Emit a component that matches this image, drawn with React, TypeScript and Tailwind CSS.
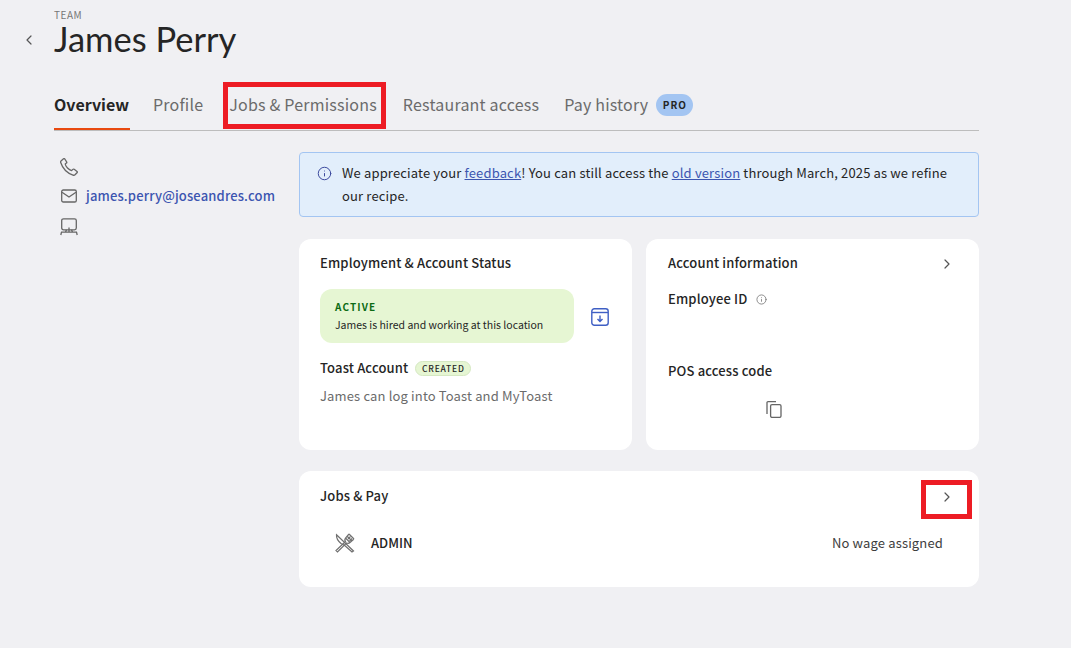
import { ChevronLeft, ChevronRight, Info } from 'lucide-react'

const body = "font-['Noto_Sans_CJK_SC','Noto_Sans',sans-serif]"

function UtensilsIcon() {
  return (
    <svg width="20" height="20" viewBox="0 0 20 20" fill="none" stroke="#707070" strokeWidth="1.2">
      {/* knife */}
      <path d="M1.5 1.8 L18.5 18 L17 19 L10 12.8 L6 10.5 C3 8 1.2 5 1.5 1.8 Z" />
      {/* fork */}
      <path d="M14 1 L19 6 M12 3 L17 8 M10.5 5 L15 9.5 M14 1 L10.5 5 C9.5 6.5 10 8 10.5 8.5 L1 17.5 L2.5 19 L11.5 10 C12.5 10.5 14 10.5 15 9.5 L19 6" />
      <path d="M15.5 3.5 L13 6 M17 5.5 L14.5 8" />
    </svg>
  )
}

function PhoneIcon() {
  return (
    <svg width="18" height="18" viewBox="0 0 18 18" fill="none" stroke="#666" strokeWidth="1.3" strokeLinejoin="round">
      <path d="M1 3 L3.5 0.8 C4 0.5 4.5 0.6 4.8 1 L6.6 3.8 C6.9 4.3 6.8 4.8 6.4 5.1 L5.2 6 C5.6 8.5 8.8 12 11.6 12.6 L12.8 11.4 C13.2 11 13.7 11 14.2 11.3 L17 13.4 C17.4 13.8 17.4 14.3 17 14.7 L15 16.8 C14.5 17.3 13.8 17.4 13 17.1 C7 15 2.5 10 0.7 4.5 C0.5 3.9 0.6 3.4 1 3 Z" />
    </svg>
  )
}

function MailIcon() {
  return (
    <svg width="16" height="14" viewBox="0 0 16 14" fill="none" stroke="#666" strokeWidth="1.3">
      <rect x="0.7" y="1" width="14.6" height="12" rx="1.6" />
      <path d="M1 3.2 L8 8 L15 3.2" />
    </svg>
  )
}

function DesktopIcon() {
  return (
    <svg width="18" height="18" viewBox="0 0 18 18" fill="none" stroke="#666" strokeWidth="1.3">
      <rect x="1.7" y="0.8" width="14.6" height="11" rx="1.8" />
      <path d="M9 9.5 V14 M6.5 11.8 L5.5 14 M11.5 11.8 L12.5 14 M1 14.2 H17 M1.5 14.2 L0.8 17 M16.5 14.2 L17.2 17" />
    </svg>
  )
}

function ArchiveIcon() {
  return (
    <svg width="18" height="18" viewBox="0 0 18 18" fill="none" stroke="#3f5fc4" strokeWidth="1.4">
      <rect x="0.8" y="0.8" width="16.4" height="16.4" rx="2.5" />
      <path d="M1 4.5 H17" />
      <path d="M9 7.5 V13.5 M6.5 11 L9 13.5 L11.5 11" />
    </svg>
  )
}

function CopyIcon() {
  return (
    <svg width="16" height="17" viewBox="0 0 16 17" fill="none" stroke="#666" strokeWidth="1.3">
      <path d="M1 13 V1.6 C1 1 1.4 0.7 2 0.7 H10" />
      <rect x="4.6" y="3.6" width="10.4" height="12.8" rx="1.4" />
    </svg>
  )
}

export default function App() {
  return (
    <div className={`${body} relative min-h-[648px] bg-[#f0f0f3] text-[#252525] overflow-hidden`}>
      {/* 页头 */}
      <div className="flex pl-[21px] pt-[9px]">
        <ChevronLeft className="w-[16px] h-[16px] mt-[23px] text-[#555]" strokeWidth={1.8} />
        <div className="ml-[17px]">
          <div className="text-[10px] leading-[12px] tracking-[0.5px] text-[#777]">TEAM</div>
          <h1 className="font-['Lato',sans-serif] text-[34.5px] leading-[38px] mt-[-1px] text-[#252525]">James Perry</h1>
        </div>
      </div>

      {/* tabs */}
      <div className="ml-[54px] mr-[92px] mt-[24px] h-[49px] border-b border-[#bdbdbd] flex items-start text-[16px] leading-[44px] tracking-[0.2px] text-[#6b6b6b]">
        <div className="w-[76px] h-[48px] border-b-2 border-[#e8490f] font-bold tracking-normal text-[#252525]">Overview</div>
        <div className="ml-[23px]">Profile</div>
        <div className="ml-[26px]">Jobs &amp; Permissions</div>
        <div className="ml-[26px]">Restaurant access</div>
        <div className="ml-[25px]">Pay history</div>
        <div className="ml-[8px] mt-[12px] h-[22px] w-[37px] rounded-full bg-[#a3c5f2] text-[10px] leading-[21px] font-bold tracking-[1px] text-center text-[#252525]">PRO</div>
      </div>

      <div className="ml-[54px] mr-[92px] mt-[21px] flex text-[13px] tracking-[0.15px]">
        {/* 联系方式 */}
        <div className="w-[245px] shrink-0 pl-[6px] pt-[6px]">
          <PhoneIcon />
          <div className="flex items-center mt-[10px] h-[20px]">
            <div className="w-[18px] flex justify-start pl-[1px]">
              <MailIcon />
            </div>
            <span className="ml-[8px] font-medium text-[#3c55b0] whitespace-nowrap">james.perry@joseandres.com</span>
          </div>
          <div className="mt-[12px]">
            <DesktopIcon />
          </div>
        </div>

        <div className="flex-1 min-w-0">
          {/* 提示 */}
          <div className="h-[65px] rounded border border-[#a3c5f2] bg-[#e2eefb] flex pl-[17px] pr-[20px] pt-[8px]">
            <Info className="w-[15px] h-[15px] mt-[5px] shrink-0 text-[#3c4a9e]" strokeWidth={1.6} />
            <p className="ml-[10px] leading-[23px] text-[#252525]">
              We appreciate your <span className="underline text-[#3c55b0]">feedback</span>! You can still access the{' '}
              <span className="underline text-[#3c55b0]">old version</span> through March, 2025 as we refine our recipe.
            </p>
          </div>

          <div className="grid grid-cols-2 gap-[14px] mt-[22px]">
            {/* 状态卡片 */}
            <div className="h-[211px] bg-white rounded-[12px] px-[21px] pt-[14px]">
              <div className="leading-[20px] font-medium">Employment &amp; Account Status</div>
              <div className="flex items-center mt-[16px]">
                <div className="w-[254px] h-[54px] rounded-[12px] bg-[#e6f6d3] pl-[15px] pt-[10px]">
                  <div className="text-[10px] leading-[16px] font-bold tracking-[1.1px] text-[#0c6b14]">ACTIVE</div>
                  <div className="text-[10.5px] leading-[19px] tracking-normal text-[#252525]">James is hired and working at this location</div>
                </div>
                <div className="ml-[17px] mt-[2px]">
                  <ArchiveIcon />
                </div>
              </div>
              <div className="flex items-center mt-[15px]">
                <span className="leading-[20px] font-medium">Toast Account</span>
                <span className="ml-[7px] h-[15px] w-[56px] text-center rounded-full bg-[#e6f6d3] border border-[#d5e8c2] text-[8.5px] leading-[12px] font-medium tracking-[0.8px]">CREATED</span>
              </div>
              <div className="mt-[8px] leading-[20px] text-[#6b6b6b]">James can log into Toast and MyToast</div>
            </div>

            {/* 账户信息 */}
            <div className="h-[211px] bg-white rounded-[12px] px-[22px] pt-[14px]">
              <div className="flex items-center justify-between">
                <span className="leading-[20px] font-medium">Account information</span>
                <ChevronRight className="w-[16px] h-[16px] mr-[2px] mt-[1px] text-[#555]" strokeWidth={1.8} />
              </div>
              <div className="flex items-center mt-[16px]">
                <span className="leading-[20px] font-medium">Employee ID</span>
                <Info className="w-[11px] h-[11px] ml-[9px] text-[#777]" strokeWidth={1.8} />
              </div>
              <div className="mt-[52px] leading-[20px] font-medium">POS access code</div>
              <div className="mt-[20px] ml-[98px]">
                <CopyIcon />
              </div>
            </div>
          </div>

          {/* 岗位与薪资 */}
          <div className="h-[116px] mt-[21px] bg-white rounded-[12px] pl-[21px] pr-[36px] pt-[15px]">
            <div className="flex items-center justify-between">
              <span className="leading-[20px] font-medium">Jobs &amp; Pay</span>
              <ChevronRight className="w-[16px] h-[16px] mr-[-12px] mt-[1px] text-[#555]" strokeWidth={1.8} />
            </div>
            <div className="flex items-center mt-[27px] pl-[15px] h-[20px]">
              <UtensilsIcon />
              <span className="ml-[16px] font-medium tracking-normal">ADMIN</span>
              <span className="ml-auto text-[#3d3d3d]">No wage assigned</span>
            </div>
          </div>
        </div>
      </div>

      {/* 红色标注框 */}
      <div className="absolute left-[223px] top-[82px] w-[163px] h-[47px] border-[5px] border-[#ed1c24]" />
      <div className="absolute left-[921px] top-[480px] w-[51px] h-[39px] border-[5px] border-[#ed1c24]" />
    </div>
  )
}
